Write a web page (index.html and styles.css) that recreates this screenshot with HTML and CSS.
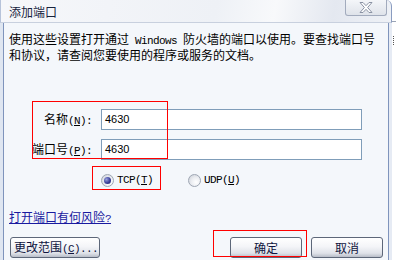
FILE: index.html
```html
<!DOCTYPE html>
<html lang="zh-CN">
<head>
<meta charset="utf-8">
<title>添加端口</title>
<link rel="stylesheet" href="styles.css">
</head>
<body>
<div class="screen">
  <div class="window">
    <div class="titlebar">
      <span class="title">添加端口</span>
      <div class="close">
        <svg width="14" height="11" viewBox="0 0 14 11"><polygon points="1,0.5 4,0.5 7,3.7 10,0.5 13,0.5 8.6,5.5 13,10.5 10,10.5 7,7.3 4,10.5 1,10.5 5.4,5.5" fill="#ffffff" stroke="#8b93a4" stroke-width="1"/></svg>
      </div>
    </div>
    <div class="client">
      <p class="desc">使用这些设置打开通过<span class="lat"> Windows </span>防火墙的端口以使用。要查找端口号<br>和协议，请查阅您要使用的程序或服务的文档。</p>
      <div class="form">
        <label class="lbl">名称<span class="lat">(<u>N</u>):</span></label>
        <div class="input">4630</div>
        <label class="lbl">端口号<span class="lat">(<u>P</u>):</span></label>
        <div class="input">4630</div>
      </div>
      <div class="radios">
        <div class="radio"><span class="dot on"></span><span class="lat">TCP(<u>T</u>)</span></div>
        <div class="radio"><span class="dot"></span><span class="lat">UDP(<u>U</u>)</span></div>
      </div>
      <a class="link" href="#">打开端口有何风险<span class="lat">?</span></a>
      <div class="buttons">
        <button class="btn wide">更改范围<span class="lat">(<u>C</u>)...</span></button>
        <span class="spacer"></span>
        <button class="btn">确定</button>
        <button class="btn">取消</button>
      </div>
      <div class="mark m1"></div>
      <div class="mark m2"></div>
      <div class="mark m3"></div>
    </div>
  </div>
  <div class="behind"><span class="peek"></span></div>
</div>
</body>
</html>
```

FILE: styles.css
```css
html, body {
  margin: 0;
  padding: 0;
}
body {
  width: 396px;
  height: 260px;
  overflow: hidden;
  background: #ffffff;
  font-family: "Noto Sans CJK SC", sans-serif;
  font-size: 12px;
  line-height: 14px;
  color: #000;
}
.screen {
  display: flex;
  width: 396px;
  height: 260px;
}
.window {
  width: 392px;
  height: 260px;
  display: flex;
  flex-direction: column;
}
.titlebar {
  height: 22px;
  display: flex;
  align-items: flex-start;
  background: linear-gradient(100deg, #f6f7fa 0%, #eef1f6 55%, #f8f9fb 70%, #e4e8f0 85%, #eef1f6 100%);
  border-bottom: 1px solid #c8d0de;
  border-left: 1px solid #b7c3da;
  border-right: 1px solid #8a9cc0;
  border-top-right-radius: 6px;
}
.title {
  padding-left: 8px;
  padding-top: 5px;
  color: #17233d;
  flex: 1;
}
.close {
  width: 40px;
  height: 15px;
  margin-right: 4px;
  border: 1px solid #a2abbd;
  border-top: none;
  border-radius: 0 0 3px 3px;
  background: linear-gradient(#f4f6f9, #dfe3ea);
  display: flex;
  align-items: center;
  justify-content: center;
}
.client {
  position: relative;
  flex: 1;
  background: #f4f7fb;
  border-left: 3px solid #dfe6f1;
  border-right: 3px solid #e6ebf4;
  box-shadow: inset 1px 0 0 #7f94bc, inset -1px 0 0 #7f94bc;
  padding: 9px 0 0 6px;
  display: flex;
  flex-direction: column;
  align-items: flex-start;
}
.lat {
  font-family: "Liberation Mono", monospace;
  font-size: 11px;
  letter-spacing: -0.6px;
}
.desc {
  margin: 0;
  white-space: nowrap;
}
.form {
  margin-top: 47px;
  display: grid;
  grid-template-columns: 83px 261px;
  column-gap: 9px;
  row-gap: 9px;
  align-items: center;
}
.lbl {
  text-align: right;
  white-space: nowrap;
  margin-top: 1px;
}
.input {
  box-sizing: border-box;
  height: 21px;
  border: 1px solid #7f9db9;
  background: #fff;
  padding: 3px 0 0 3px;
  font-family: "Liberation Sans", sans-serif;
  font-size: 11px;
  line-height: 13px;
}
.radios {
  margin-top: 13px;
  margin-left: 92px;
  display: flex;
  gap: 35px;
  height: 14px;
  align-items: center;
}
.radio {
  display: flex;
  align-items: center;
  gap: 3px;
}
.dot {
  box-sizing: border-box;
  width: 13px;
  height: 13px;
  border-radius: 50%;
  border: 1px solid #9ea6b3;
  background: radial-gradient(circle at 65% 65%, #ffffff 0%, #eceef2 45%, #c8ccd4 100%);
  display: flex;
  align-items: center;
  justify-content: center;
}
.dot.on::after {
  content: "";
  width: 7px;
  height: 7px;
  border-radius: 50%;
  background: radial-gradient(circle at 35% 35%, #9aa3e0 0%, #3a3f98 55%, #1e226e 100%);
}
.link {
  margin-top: 23px;
  color: #1a1aa0;
  text-decoration: underline;
  white-space: nowrap;
}
.buttons {
  margin-top: 11px;
  margin-left: 1px;
  display: flex;
  width: 373px;
  gap: 9px;
}
.spacer {
  flex: 1;
}
.btn {
  box-sizing: border-box;
  width: 72px;
  height: 21px;
  padding: 0;
  border: 1px solid #5d6779;
  border-radius: 3px;
  background: linear-gradient(#ffffff 0%, #f4f5f8 45%, #dfe2e9 80%, #b8bdc8 100%);
  font-family: "Noto Sans CJK SC", sans-serif;
  font-size: 12px;
  line-height: 14px;
  color: #0f1440;
}
.btn.wide {
  width: 90px;
  text-align: left;
  padding-left: 3px;
}
.mark {
  position: absolute;
  border: 1px solid #ff0000;
  box-sizing: border-box;
}
.m1 { left: 29px; top: 78px; width: 136px; height: 58px; }
.m2 { left: 89px; top: 143px; width: 69px; height: 24px; }
.m3 { left: 210px; top: 207px; width: 94px; height: 27px; }
.behind {
  flex: 1;
  overflow: hidden;
  background: #ffffff;
  border-top: 1px solid #9aa4b6;
  margin-top: 21px;
  padding-top: 14px;
}
.peek {
  display: block;
  width: 2px;
  height: 9px;
  margin-left: 1px;
  border-left: 1px dotted #555;
  border-right: 1px dotted #777;
}
```
